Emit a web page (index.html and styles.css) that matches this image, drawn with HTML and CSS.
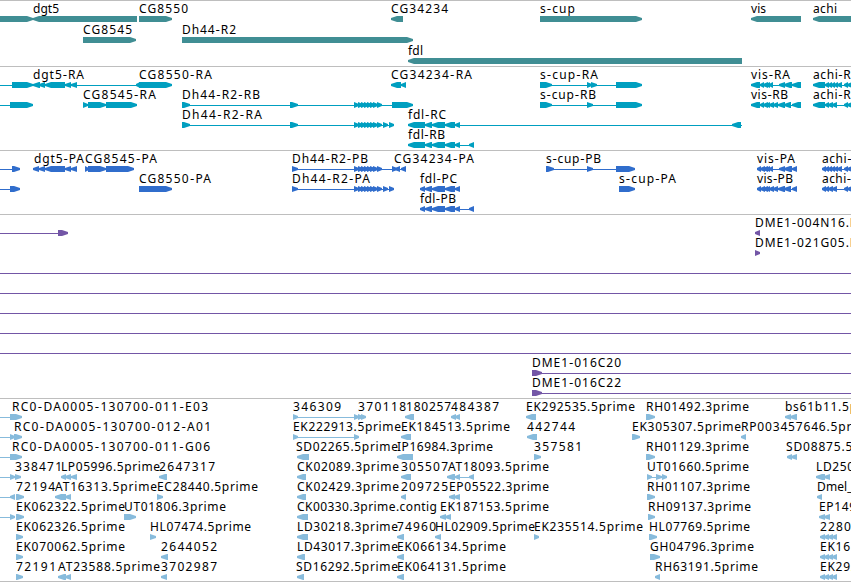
FILE: index.html
```
<!DOCTYPE html>
<html lang="en">
<head>
    <meta charset="UTF-8">
    <title>Genome tracks</title>
    <link rel="stylesheet" href="styles.css">
</head>
<body>
    <main class="browser">
        <section class="track genes" id="genes"></section>
        <section class="track transcripts" id="transcripts"></section>
        <section class="track proteins" id="proteins"></section>
        <section class="track clones" id="clones"></section>
        <section class="track ests" id="ests"></section>
    </main>
    <script src="tracks.js"></script>
</body>
</html>
```
FILE: styles.css
```
body {
    margin: 0;
    background: #fff;
    overflow: hidden;
}
.browser {
    display: flex;
    flex-direction: column;
    width: 851px;
    height: 582px;
    overflow: hidden;
}
.track {
    box-sizing: border-box;
    flex: none;
    border-top: 1px solid #bebebe;
}
.row {
    display: block;
    width: 851px;
    height: 20px;
    overflow: visible;
}
.row text {
    font-family: "Noto Sans", "Open Sans", sans-serif;
    font-size: 12px;
    fill: #000;
}
.row .dash {
    font-family: "DejaVu Sans", sans-serif;
}
.shape {
    fill: currentColor;
}
.genes {
    height: 66px;
    color: #408e94;
}
.genes .row {
    height: 21px;
}
.transcripts {
    height: 84px;
    color: #009fc0;
}
.proteins {
    height: 64px;
    color: #306dcc;
}
.clones {
    height: 184px;
    color: #7356a6;
}
.ests {
    height: 184px;
    color: #87bbdc;
    border-bottom: 1px solid #bebebe;
}
```
FILE: tracks.js
```
// Each row is [shapes, labels].
// Shapes: > forward exon, < reverse exon, = connecting line, as start-end.
// Labels: start:end:name
const tracks = {
    genes: [
        ['>0-33 <33-137 >139-172 <391-403 >540-642 <751-801 <813-860',
         '33:59:dgt5 139:188:CG8550 391:448:CG34234 540:575:s-cup 751:766:vis 813:837:achi'],
        ['>83-136 >182-413', '83:132:CG8545 182:236:Dh44-R2'],
        ['<408-742', '408:423:fdl']
    ],
    transcripts: [
        ['=0-137 >12-33 <33-40 <39-45 <45-65 <65-71 <71-77 <136-140 >139-172 <391-401 <401-406 =540-642 >540-552 >587-592 >591-597 >616-642 =751-801 <751-760 <760-764 <763-768 <766-770 <769-773 <779-785 <784-792 <792-801 =813-851 <813-825 <825-829 <828-832 <831-835 <834-838 <837-842 <844-848 <847-852',
         '33:84:dgt5-RA 139:212:CG8550-RA 391:472:CG34234-RA 540:598:s-cup-RA 751:790:vis-RA 813:859:achi-RA'],
        ['=0-12 >10-33 =83-137 >83-88 >88-106 >106-137 =182-413 >182-190 >290-298 >354-359 >358-363 >361-366 >364-369 >367-372 >370-375 >373-378 >377-382 >392-413 =540-642 >540-552 >587-593 >616-642 =751-801 <751-760 <760-764 <763-768 <766-770 <769-774 <773-778 <778-785 <784-791 <792-801 =813-851 <813-825 <825-829 <828-833 <832-837 <844-848 <847-852',
         '83:156:CG8545-RA 182:260:Dh44-R2-RB 540:596:s-cup-RB 751:788:vis-RB 813:859:achi-RB'],
        ['=182-394 >182-190 >290-298 >354-359 >358-363 >361-366 >364-369 >367-372 >370-375 >373-378 >377-382 >383-388 >389-394 =408-742 <408-425 <425-432 <432-445 <445-455 <455-460 <732-741',
         '182:262:Dh44-R2-RA 408:446:fdl-RC'],
        ['=408-474 <408-425 <425-432 <432-445 <445-455 <455-460 <469-474', '408:445:fdl-RB']
    ],
    proteins: [
        ['=0-20 >12-20 =33-77 <33-39 <39-45 <45-65 <65-71 <71-77 >85-89 >88-106 >106-134 =292-406 >292-298 >354-359 >358-363 >361-366 >364-369 >367-372 >370-375 >373-378 >377-382 >392-397 <395-400 <401-406 =546-635 >546-554 >587-593 >616-635 =757-797 <757-761 <760-765 <763-768 <766-770 <769-773 <779-785 <784-792 <792-797 =822-851 <822-826 <825-829 <828-832 <831-835 <834-838 <837-842 <844-848 <847-852',
         '34:84:dgt5-PA 85:157:CG8545-PA 292:368:Dh44-R2-PB 394:474:CG34234-PA 546:601:s-cup-PB 757:795:vis-PA 822:867:achi-PA'],
        ['=0-20 >10-20 >139-172 =292-394 >292-298 >354-359 >358-363 >361-366 >364-369 >367-372 >370-375 >373-378 >377-382 >383-388 >389-394 =420-460 <420-425 <425-432 <432-445 <445-455 <455-460 >619-635 =757-797 <757-761 <760-765 <763-768 <766-770 <769-774 <773-778 <778-785 <784-791 <792-797 =822-851 <822-826 <825-829 <828-833 <832-837 <844-848 <847-852',
         '139:211:CG8550-PA 292:370:Dh44-R2-PA 420:457:fdl-PC 619:676:s-cup-PA 757:793:vis-PB 822:867:achi-PB'],
        ['=420-474 <420-425 <425-432 <432-445 <445-455 <455-460 <469-474', '420:456:fdl-PB']
    ],
    clones: [
        ['=0-68 >58-68 <755-760', '755:856:DME1-004N16.F'],
        ['>755-760', '755:856:DME1-021G05.F'],
        ['=0-851', ''],
        ['=0-851', ''],
        ['=0-851', ''],
        ['=0-851', ''],
        ['=0-851', ''],
        ['=532-851 >532-542', '532:621:DME1-016C20'],
        ['=532-851 >532-542', '532:621:DME1-016C22']
    ],
    ests: [
        ['=0-12 >10-22 =293-365 >293-298 >354-359 >358-363 >361-366 <405-414 <451-456 <455-460 <526-536 >646-655 <785-791 <790-797',
         '12:208:RC0-DA0005-130700-011-E03 293:341:346309 358:406:370118 406:451:180257 451:499:484387 526:635:EK292535.5prime 646:749:RH01492.3prime 785:886:bs61b11.5prime'],
        ['=0-12 >10-15 >14-22 =293-359 >293-298 >354-359 <401-411 <527-537 >632-640 <741-746',
         '14:211:RC0-DA0005-130700-012-A01 293:401:EK222913.5prime 401:510:EK184513.5prime 527:575:442744 632:741:EK305307.5prime 741:875:RP003457646.5prime'],
        ['=0-12 >10-22 <297-309 <397-413 >534-541 >646-655 <787-792 <791-797',
         '12:210:RC0-DA0005-130700-011-G06 296:398:SD02265.5prime 397:493:IP16984.3prime 534:582:357581 646:749:RH01129.3prime 786:890:SD08875.5prime'],
        ['=0-12 >10-15 >15-21 <61-66 <65-71 <71-77 <159-167 <297-306 <401-411 =447-474 <447-455 <455-460 <469-474 =647-667 >647-652 >656-662 >662-667 <816-825 <824-830',
         '15:62:338471 61:160:LP05996.5prime 159:215:2647317 297:399:CK02089.3prime 401:448:305507 448:549:AT18093.5prime 647:749:UT01660.5prime 816:917:LD25033.5prime'],
        ['=0-12 <10-15 >16-24 <55-66 <65-71 >157-163 <297-306 <401-406 <449-455 <454-460 >647-655 <817-822',
         '16:55:72194 55:157:AT16313.5prime 157:258:EC28440.5prime 297:399:CK02429.3prime 401:448:209725 449:549:EP05522.3prime 647:750:RH01107.3prime 817:876:Dmel_CG1'],
        ['=0-12 >10-15 >16-24 >124-136 <297-308 <440-446 <445-451 >648-655 <819-825 <824-830',
         '16:125:EK062322.5prime 124:226:UT01806.3prime 297:437:CK00330.3prime.contig 440:549:EK187153.5prime 648:751:RH09137.3prime 819:919:EP14912.5prime'],
        ['>16-23 >150-156 <297-308 <397-404 <435-441 >534-539 >649-657 <820-825 <824-829 <828-833 <832-837',
         '16:125:EK062326.5prime 150:251:HL07474.5prime 297:398:LD30218.3prime 397:436:74960 435:535:HL02909.5prime 534:643:EK235514.5prime 649:750:HL07769.5prime 820:867:228015'],
        ['>16-23 <161-168 <297-305 <397-404 >650-660 <820-825 <824-829 <828-833 <832-837',
         '16:125:EK070062.5prime 161:217:2644052 297:398:LD43017.3prime 397:506:EK066134.5prime 650:754:GH04796.3prime 820:929:EK161184.5prime'],
        ['>16-23 <58-66 <65-71 <161-167 <297-304 <397-404 <655-660 <820-825 <824-829 <828-833 <832-837',
         '16:56:72191 58:160:AT23588.5prime 161:217:3702987 296:398:SD16292.5prime 397:506:EK064131.5prime 655:758:RH63191.5prime 820:929:EK292535.5prime']
    ]
};

const TOP = 15;
const MID = 18;
const BOTTOM = 21;

function drawShape(item) {
    const [start, end] = item.slice(1).split('-').map(Number);
    if (item[0] === '=') {
        return `<rect class="shape" x="${start}" y="${MID}" width="${end - start}" height="1"/>`;
    }
    const tip = Math.min(6, end - start);
    const points = item[0] === '>'
        ? [[start, TOP], [end - tip, TOP], [end, MID - 1], [end, MID + 1], [end - tip, BOTTOM], [start, BOTTOM]]
        : [[end, TOP], [start + tip, TOP], [start, MID - 1], [start, MID + 1], [start + tip, BOTTOM], [end, BOTTOM]];
    return `<polygon class="shape" points="${points.join(' ')}"/>`;
}

function drawLabel(item) {
    const [start, end, name] = item.split(':');
    const text = name.replace(/-/g, '<tspan class="dash">-</tspan>');
    return `<text x="${start}" y="12" textLength="${end - start}">${text}</text>`;
}

for (const id in tracks) {
    document.getElementById(id).innerHTML = tracks[id].map(([shapes, labels]) =>
        `<svg class="row">${shapes.split(' ').map(drawShape).join('')}${labels.split(' ').filter(Boolean).map(drawLabel).join('')}</svg>`
    ).join('');
}
```
